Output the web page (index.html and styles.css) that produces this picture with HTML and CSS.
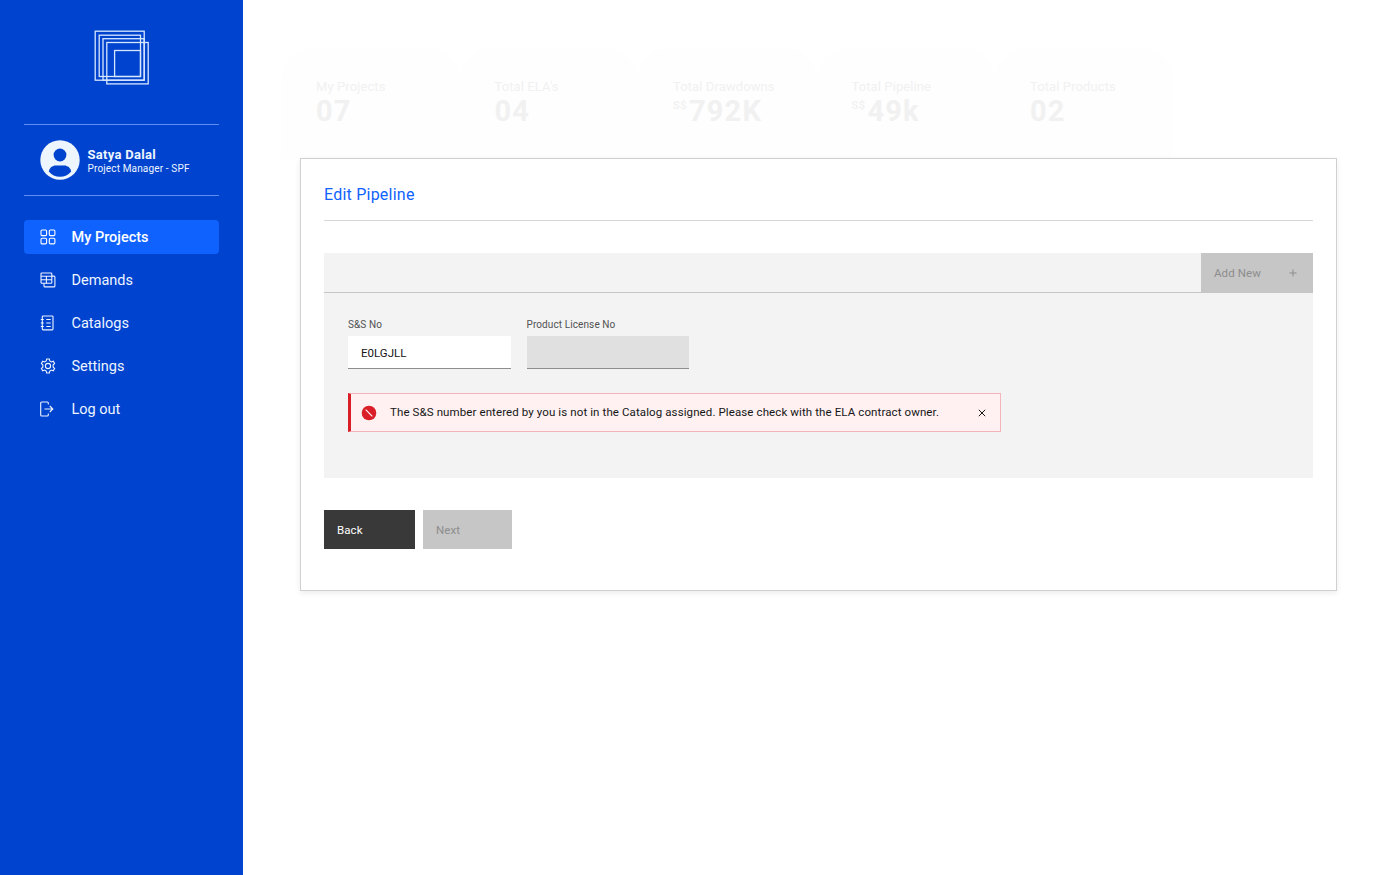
FILE: index.html
```html
<!doctype html>
<html lang="en">

<head>
  <meta charset="UTF-8" />
  <meta name="viewport" content="width=device-width, initial-scale=1.0" />
  <title>Edit Pipeline</title>
  <link rel="stylesheet" href="styles.css">
</head>

<body>
  <div class="app">
    <aside class="sidebar">
      <svg class="logo" width="56" height="56" viewBox="0 0 56 56">
        <rect x="1.2" y="1.2" width="49" height="49" />
        <rect x="5.2" y="5.2" width="41.3" height="41.3" />
        <rect x="9" y="8.7" width="41.2" height="41.5" />
        <rect x="12.8" y="12.5" width="41.4" height="41.4" />
        <rect x="20.6" y="20.5" width="25.9" height="26" />
      </svg>

      <div class="profile">
        <svg class="avatar" width="40" height="40" viewBox="0 0 40 40">
          <circle cx="20" cy="20" r="19.7" fill="#edf5ff" />
          <circle cx="20" cy="15" r="6.4" fill="#0043ce" />
          <path d="M8.8 31.5C9.5 27.7 12.3 25.5 16 25.5h8c3.7 0 6.5 2.2 7.2 6C28.5 35 24.5 36.8 20 36.8S11.5 35 8.8 31.5z" fill="#0043ce" />
        </svg>
        <div class="profile-text">
          <div class="profile-name">Satya Dalal</div>
          <div class="profile-role">Project Manager - SPF</div>
        </div>
      </div>

      <nav class="nav">
        <a class="nav-item active">
          <svg width="16" height="16" viewBox="0 0 16 16">
            <rect x="1" y="1" width="5.6" height="5.6" rx="1.2" />
            <rect x="9.3" y="1" width="5.6" height="5.6" rx="1.2" />
            <rect x="1" y="9.3" width="5.6" height="5.6" rx="1.2" />
            <rect x="9.3" y="9.3" width="5.6" height="5.6" rx="1.2" />
          </svg>
          <span>My Projects</span>
        </a>
        <a class="nav-item">
          <svg width="16" height="16" viewBox="0 0 16 16">
            <rect x="1" y="1" width="10.8" height="10.3" rx=".8" />
            <path d="M1 4.2h10.8M1 7.7h10.8M6.4 4.2v7.1M11.8 4.1h2.1a1 1 0 0 1 1 1v8.8a1 1 0 0 1-1 1H5a1 1 0 0 1-1-1v-2.6" />
          </svg>
          <span>Demands</span>
        </a>
        <a class="nav-item">
          <svg width="16" height="16" viewBox="0 0 16 16">
            <rect x="2.3" y="1" width="10.7" height="13.9" rx=".8" />
            <path d="M.8 4.5h3M.8 8h3M.8 11.5h3M6.3 4.5h4.4M6.3 8h4.4M6.3 11.5h4.4" />
          </svg>
          <span>Catalogs</span>
        </a>
        <a class="nav-item">
          <svg width="16" height="16" viewBox="0 0 16 16">
            <circle cx="8" cy="8" r="2.6" />
            <path d="M6.7 1h2.6l.5 2 1.5.9 2-.7 1.3 2.3L13.1 7v2l1.5 1.5-1.3 2.3-2-.7-1.5.9-.5 2H6.7l-.5-2-1.5-.9-2 .7-1.3-2.3L2.9 9V7L1.4 5.5l1.3-2.3 2 .7L6.2 3z" />
          </svg>
          <span>Settings</span>
        </a>
        <a class="nav-item">
          <svg width="16" height="16" viewBox="0 0 16 16">
            <path d="M8.3 3.5V2a1 1 0 0 0-1-1H1.7a1 1 0 0 0-1 1v12a1 1 0 0 0 1 1h5.6a1 1 0 0 0 1-1v-1.5M4.5 8h8.2M9.8 5l3 3-3 3" />
          </svg>
          <span>Log out</span>
        </a>
      </nav>
    </aside>

    <main class="main">
      <div class="stats">
        <div class="stat">
          <div class="stat-label">My Projects</div>
          <div class="stat-value">07</div>
        </div>
        <div class="stat">
          <div class="stat-label">Total ELA's</div>
          <div class="stat-value">04</div>
        </div>
        <div class="stat">
          <div class="stat-label">Total Drawdowns</div>
          <div class="stat-value"><small>S$</small>792K</div>
        </div>
        <div class="stat">
          <div class="stat-label">Total Pipeline</div>
          <div class="stat-value"><small>S$</small>49k</div>
        </div>
        <div class="stat">
          <div class="stat-label">Total Products</div>
          <div class="stat-value">02</div>
        </div>
      </div>

      <section class="modal">
        <h1 class="modal-title">Edit Pipeline</h1>

        <div class="panel">
          <div class="toolbar">
            <button class="btn btn-add" disabled>
              <span>Add New</span>
              <svg width="8" height="8" viewBox="0 0 8 8"><path d="M4 .5v7M.5 4h7" /></svg>
            </button>
          </div>

          <div class="fields">
            <label class="field">
              <span>S&amp;S No</span>
              <input type="text" value="E0LGJLL">
            </label>
            <label class="field">
              <span>Product License No</span>
              <input type="text" disabled>
            </label>
          </div>

          <div class="notice">
            <svg class="notice-icon" width="16" height="16" viewBox="0 0 16 16">
              <circle cx="8" cy="8" r="7.3" fill="#da1e28" />
              <path d="M4.7 4.7l6.6 6.6" stroke="#fff" stroke-width="1.1" />
            </svg>
            <span class="notice-text">The S&amp;S number entered by you is not in the Catalog assigned. Please check with the ELA contract owner.</span>
            <svg class="notice-close" width="8" height="8" viewBox="0 0 8 8"><path d="M.8.8l6.4 6.4M7.2.8L.8 7.2" /></svg>
          </div>
        </div>

        <div class="actions">
          <button class="btn btn-back">Back</button>
          <button class="btn btn-next" disabled>Next</button>
        </div>
      </section>
    </main>
  </div>
</body>

</html>
```
FILE: styles.css
```css
* {
  margin: 0;
  padding: 0;
  box-sizing: border-box;
}

body {
  font-family: Roboto, "Liberation Sans", sans-serif;
  color: #161616;
  background: #fff;
  overflow: hidden;
}

svg {
  display: block;
  flex: none;
}

.app {
  display: flex;
  height: 100vh;
}

.sidebar {
  width: 243px;
  flex: none;
  padding: 30px 24px 0;
  background: #0043ce;
  color: #edf5ff;
}

.logo {
  margin: 0 auto 38px;
  fill: none;
  stroke: #d8e7ff;
  stroke-width: 1.3;
}

.profile {
  display: flex;
  align-items: center;
  gap: 7.5px;
  height: 72px;
  padding-left: 16px;
  border-top: 1px solid #5c8df0;
  border-bottom: 1px solid #5c8df0;
}

.profile-text {
  padding-top: 2px;
}

.profile-name {
  font-size: 13px;
  font-weight: 700;
  line-height: 15px;
  letter-spacing: 0.3px;
}

.profile-role {
  font-size: 10px;
  line-height: 13px;
  letter-spacing: 0.15px;
  white-space: nowrap;
}

.nav {
  display: flex;
  flex-direction: column;
  gap: 9px;
  margin-top: 24px;
}

.nav-item {
  display: flex;
  align-items: center;
  gap: 15.5px;
  height: 34px;
  padding-left: 16px;
  border-radius: 4px;
  font-size: 14.5px;
}

.nav-item svg {
  fill: none;
  stroke: currentColor;
  stroke-width: 1.1;
}

.nav-item.active {
  background: #0f62fe;
  color: #fff;
  font-weight: 500;
}

.main {
  flex: 1;
  position: relative;
}

.stats {
  display: flex;
  padding: 47px 0 0 38px;
}

.stat {
  width: 178.5px;
  height: 112px;
  padding: 31px 0 0 35px;
  border-radius: 34px 34px 0 0;
  background: #fefefe;
  color: #f1f1f1;
}

.stat-label {
  font-size: 13px;
  line-height: 17px;
  letter-spacing: 0.1px;
}

.stat-value {
  display: flex;
  font-size: 29px;
  font-weight: 700;
  line-height: 32px;
  letter-spacing: 1.2px;
}

.stat-value small {
  font-size: 11px;
  font-weight: 500;
  line-height: 22px;
  letter-spacing: 0.5px;
  margin-right: 2px;
}

/* dialog lies over the faded dashboard */
.modal {
  position: absolute;
  top: 158px;
  left: 57px;
  width: 1037px;
  height: 433px;
  padding: 0 23px;
  background: #fff;
  border: 1px solid #d0d0d0;
  box-shadow: 0 2px 6px rgba(0, 0, 0, 0.08);
}

.modal-title {
  height: 62px;
  padding-top: 25px;
  border-bottom: 1px solid #d8d8d8;
  font-size: 16px;
  font-weight: 400;
  line-height: 22px;
  letter-spacing: 0.23px;
  color: #0f62fe;
}

.panel {
  height: 225px;
  margin-top: 32px;
  background: #f3f3f3;
}

.toolbar {
  display: flex;
  justify-content: flex-end;
  height: 40px;
  border-bottom: 1px solid #c6c6c6;
}

.btn {
  display: flex;
  align-items: center;
  height: 39px;
  padding: 0 13px;
  border: none;
  font-family: inherit;
  font-size: 11.5px;
  letter-spacing: 0.1px;
}

.btn:disabled {
  background: #c6c6c6;
  color: #8d8d8d;
}

.btn-add {
  width: 112px;
  height: 40px;
  padding-right: 16px;
  justify-content: space-between;
}

.btn-add svg,
.notice-close {
  fill: none;
  stroke: currentColor;
  stroke-width: 1;
}

.fields {
  display: flex;
  gap: 16px;
  padding: 25px 24px 0;
}

.field {
  width: 162.5px;
  font-size: 10px;
  line-height: 14px;
  letter-spacing: 0.1px;
  color: #525252;
}

.field span {
  display: block;
}

.field input {
  display: block;
  width: 100%;
  height: 33px;
  margin-top: 4px;
  padding: 1px 13px 0;
  border: none;
  border-bottom: 1px solid #8d8d8d;
  background: #fff;
  font-family: inherit;
  font-size: 11.5px;
  color: #161616;
}

.field input:disabled {
  background: #e0e0e0;
}

.notice {
  display: flex;
  align-items: center;
  width: 653px;
  height: 39px;
  margin: 24px 0 0 24px;
  padding: 0 14px 0 10px;
  border: 1px solid #f3b5ba;
  border-left: 3px solid #da1e28;
  background: #fff1f1;
}

.notice-text {
  margin-left: 13px;
  padding-bottom: 1px;
  font-size: 11.5px;
  letter-spacing: 0.105px;
  white-space: nowrap;
}

.notice-close {
  margin-left: auto;
}

.actions {
  display: flex;
  gap: 8px;
  margin-top: 32px;
}

.btn-back {
  width: 91px;
  background: #393939;
  color: #fff;
}

.btn-next {
  width: 89px;
}
```
